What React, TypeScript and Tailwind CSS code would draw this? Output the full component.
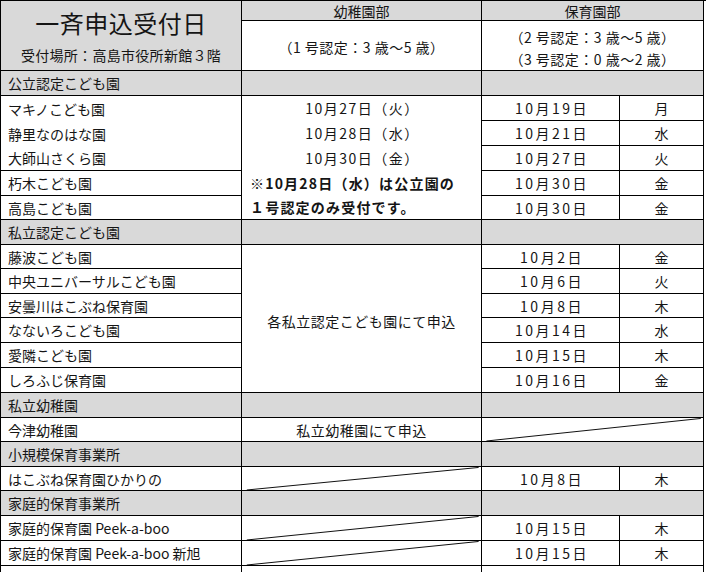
import React from "react";

const line = "border-r border-b border-black";
const gray = "bg-[#d9d9d9]";

const Diagonal = () => (
  <svg
    className="absolute inset-0 h-full w-full"
    viewBox="0 0 100 100"
    preserveAspectRatio="none"
  >
    <line x1="2" y1="100" x2="99" y2="2" stroke="#111" strokeWidth="1" vectorEffect="non-scaling-stroke" />
  </svg>
);

const Name = ({ row, children }: { row: string; children: React.ReactNode }) => (
  <div className={`col-start-1 ${row} ${line} flex items-center pl-[7px]`}>{children}</div>
);

const Date = ({ row, date, day }: { row: string; date: string; day: string }) => (
  <>
    <div className={`col-start-3 ${row} ${line} flex items-center justify-center pl-[3px] tracking-[2.5px]`}>{date}</div>
    <div className={`col-start-4 ${row} ${line} flex items-center justify-center`}>{day}</div>
  </>
);

const GrayRow = ({ row, label }: { row: string; label: string }) => (
  <>
    <div className={`col-start-1 ${row} ${line} ${gray} flex items-center pl-[7px]`}>{label}</div>
    <div className={`col-start-2 ${row} ${line} ${gray}`} />
    <div className={`col-start-3 col-span-2 ${row} ${line} ${gray}`} />
  </>
);

export default function App() {
  return (
    <div className="h-[572px] w-[706px] overflow-hidden bg-white font-['Noto_Sans_CJK_JP',sans-serif] text-[14px] leading-none text-[#151515]">
      <div className="grid grid-cols-[241px_240px_138px_84px] grid-rows-[20px_50px_25px_25px_25px_25px_25px_24px_25px_24px_25px_24px_25px_25px_25px_25px_24px_25px_24px_25px_25px_25px_6px] border-l border-t border-black">
        {/* header */}
        <div className={`col-start-1 row-start-1 row-span-2 ${line} ${gray} flex flex-col items-center pt-[10px]`}>
          <div className="text-[24px] font-normal tracking-[0.5px]">一斉申込受付日</div>
          <div className="mt-[13px] text-[14px] tracking-[0.3px]">受付場所：高島市役所新館３階</div>
        </div>
        <div className={`col-start-2 row-start-1 ${line} ${gray} flex items-center justify-center`}>幼稚園部</div>
        <div className={`col-start-3 col-span-2 row-start-1 ${line} ${gray} flex items-center justify-center`}>保育園部</div>
        <div className={`col-start-2 row-start-2 ${line} flex items-center justify-center pt-[2px] tracking-[0.5px]`}>（1 号認定：3 歳～5 歳）</div>
        <div className={`col-start-3 col-span-2 row-start-2 ${line} flex flex-col items-center pt-[5px] tracking-[0.5px]`}>
          <div className="flex h-[24px] items-center">（2 号認定：3 歳～5 歳）</div>
          <div className="flex h-[24px] items-center">（3 号認定：0 歳～2 歳）</div>
        </div>

        {/* 公立認定こども園 */}
        <GrayRow row="row-start-3" label="公立認定こども園" />
        <div className={`col-start-1 row-start-4 row-span-3 ${line} flex flex-col pl-[7px]`}>
          <div className="flex h-[25px] items-center">マキノこども園</div>
          <div className="flex h-[25px] items-center">静里なのはな園</div>
          <div className="flex h-[24px] items-center">大師山さくら園</div>
        </div>
        <Name row="row-start-7">朽木こども園</Name>
        <Name row="row-start-8">高島こども園</Name>
        <div className={`col-start-2 row-start-4 row-span-5 ${line} flex flex-col`}>
          <div className="flex h-[25px] items-center justify-center pl-[2px] tracking-[1.5px]">10月27日（火）</div>
          <div className="flex h-[25px] items-center justify-center pl-[2px] tracking-[1.5px]">10月28日（水）</div>
          <div className="flex h-[25px] items-center justify-center pl-[2px] tracking-[1.5px]">10月30日（金）</div>
          <div className="flex h-[25px] items-center pl-[8px] font-bold tracking-[1.2px]">※10月28日（水）は公立園の</div>
          <div className="flex h-[24px] items-center pl-[8px] font-bold tracking-[1.2px]">１号認定のみ受付です。</div>
        </div>
        <Date row="row-start-4" date="10月19日" day="月" />
        <Date row="row-start-5" date="10月21日" day="水" />
        <Date row="row-start-6" date="10月27日" day="火" />
        <Date row="row-start-7" date="10月30日" day="金" />
        <Date row="row-start-8" date="10月30日" day="金" />

        {/* 私立認定こども園 */}
        <GrayRow row="row-start-9" label="私立認定こども園" />
        <Name row="row-start-10">藤波こども園</Name>
        <Name row="row-start-11">中央ユニバーサルこども園</Name>
        <Name row="row-start-12">安曇川はこぶね保育園</Name>
        <Name row="row-start-13">なないろこども園</Name>
        <Name row="row-start-14">愛隣こども園</Name>
        <Name row="row-start-15">しろふじ保育園</Name>
        <div className={`col-start-2 row-start-10 row-span-6 ${line} flex items-center justify-center pt-[4px] tracking-[0.5px]`}>
          各私立認定こども園にて申込
        </div>
        <Date row="row-start-10" date="10月2日" day="金" />
        <Date row="row-start-11" date="10月6日" day="火" />
        <Date row="row-start-12" date="10月8日" day="木" />
        <Date row="row-start-13" date="10月14日" day="水" />
        <Date row="row-start-14" date="10月15日" day="木" />
        <Date row="row-start-15" date="10月16日" day="金" />

        {/* 私立幼稚園 */}
        <GrayRow row="row-start-16" label="私立幼稚園" />
        <Name row="row-start-17">今津幼稚園</Name>
        <div className={`col-start-2 row-start-17 ${line} flex items-center justify-center tracking-[0.5px]`}>私立幼稚園にて申込</div>
        <div className={`relative col-start-3 col-span-2 row-start-17 ${line}`}>
          <Diagonal />
        </div>

        {/* 小規模保育事業所 */}
        <GrayRow row="row-start-18" label="小規模保育事業所" />
        <Name row="row-start-19">はこぶね保育園ひかりの</Name>
        <div className={`relative col-start-2 row-start-19 ${line}`}>
          <Diagonal />
        </div>
        <Date row="row-start-19" date="10月8日" day="木" />

        {/* 家庭的保育事業所 */}
        <GrayRow row="row-start-20" label="家庭的保育事業所" />
        <Name row="row-start-21">家庭的保育園 Peek-a-boo</Name>
        <div className={`relative col-start-2 row-start-21 ${line}`}>
          <Diagonal />
        </div>
        <Date row="row-start-21" date="10月15日" day="木" />
        <Name row="row-start-22">家庭的保育園 Peek-a-boo 新旭</Name>
        <div className={`relative col-start-2 row-start-22 ${line}`}>
          <Diagonal />
        </div>
        <Date row="row-start-22" date="10月15日" day="木" />

        {/* cut-off row */}
        <div className="col-start-1 row-start-23 border-r border-black" />
        <div className="col-start-2 row-start-23 border-r border-black" />
        <div className="col-start-3 col-span-2 row-start-23 border-r border-black" />
      </div>
    </div>
  );
}
